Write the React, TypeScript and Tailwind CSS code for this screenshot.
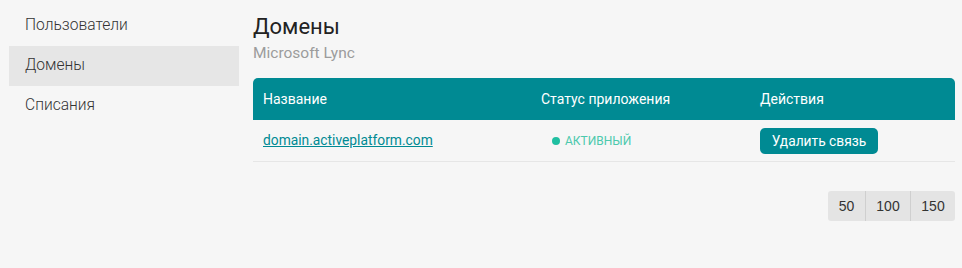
export default function App() {
  const nav = ["Пользователи", "Домены", "Списания"];
  return (
    <div className="w-[962px] h-[268px] bg-[#f6f6f6] flex" style={{ fontFamily: "Roboto, 'Noto Sans', sans-serif" }}>
      <div className="w-[230px] ml-[9px] pt-[6px] flex flex-col shrink-0">
        {nav.map((n, i) => (
          <div
            key={n}
            className={`h-[40px] flex items-center pl-[16px] text-[15.6px] font-light text-[#333] ${i === 1 ? "bg-[#e6e6e6]" : ""}`}
          >
            {n}
          </div>
        ))}
      </div>
      <div className="ml-[14px] w-[702px] flex flex-col">
        <div className="pt-[13px] text-[22px] leading-[28px] text-[#222]">Домены</div>
        <div className="text-[15.5px] leading-[20px] text-[#9c9c9c] mt-[2px]">Microsoft Lync</div>
        <div className="mt-[15px] h-[42px] bg-[#008a93] rounded-t-[5px] flex items-center text-white text-[14px]">
          <div className="w-[288px] pl-[10px]">Название</div>
          <div className="w-[219px]">Статус приложения</div>
          <div>Действия</div>
        </div>
        <div className="h-[42px] flex items-center border-b border-[#e6e6e6] text-[13.8px]">
          <div className="w-[288px] pl-[10px]">
            <a className="text-[#008a93] underline">domain.activeplatform.com</a>
          </div>
          <div className="w-[219px] flex items-center">
            <span className="w-[8px] h-[8px] rounded-full bg-[#20bfa1] mr-[5px] ml-[11px]" />
            <span className="text-[12px] text-[#4cc9ad]">АКТИВНЫЙ</span>
          </div>
          <div>
            <button className="h-[26px] w-[118px] px-0 whitespace-nowrap rounded-[5px] bg-[#008a93] text-white text-[13.8px] leading-[26px] text-center">
              Удалить связь
            </button>
          </div>
        </div>
        <div className="flex justify-end mt-[29px]">
          <div className="flex h-[30px] rounded-[3px] bg-[#e4e4e4] text-[14px] text-[#333]" style={{ fontFamily: "'Liberation Sans', Arial, sans-serif" }}>
            <div className="w-[37px] flex items-center justify-center">50</div>
            <div className="w-[45px] flex items-center justify-center border-l border-[#cfcfcf]">100</div>
            <div className="w-[45px] flex items-center justify-center border-l border-[#cfcfcf]">150</div>
          </div>
        </div>
      </div>
    </div>
  );
}
